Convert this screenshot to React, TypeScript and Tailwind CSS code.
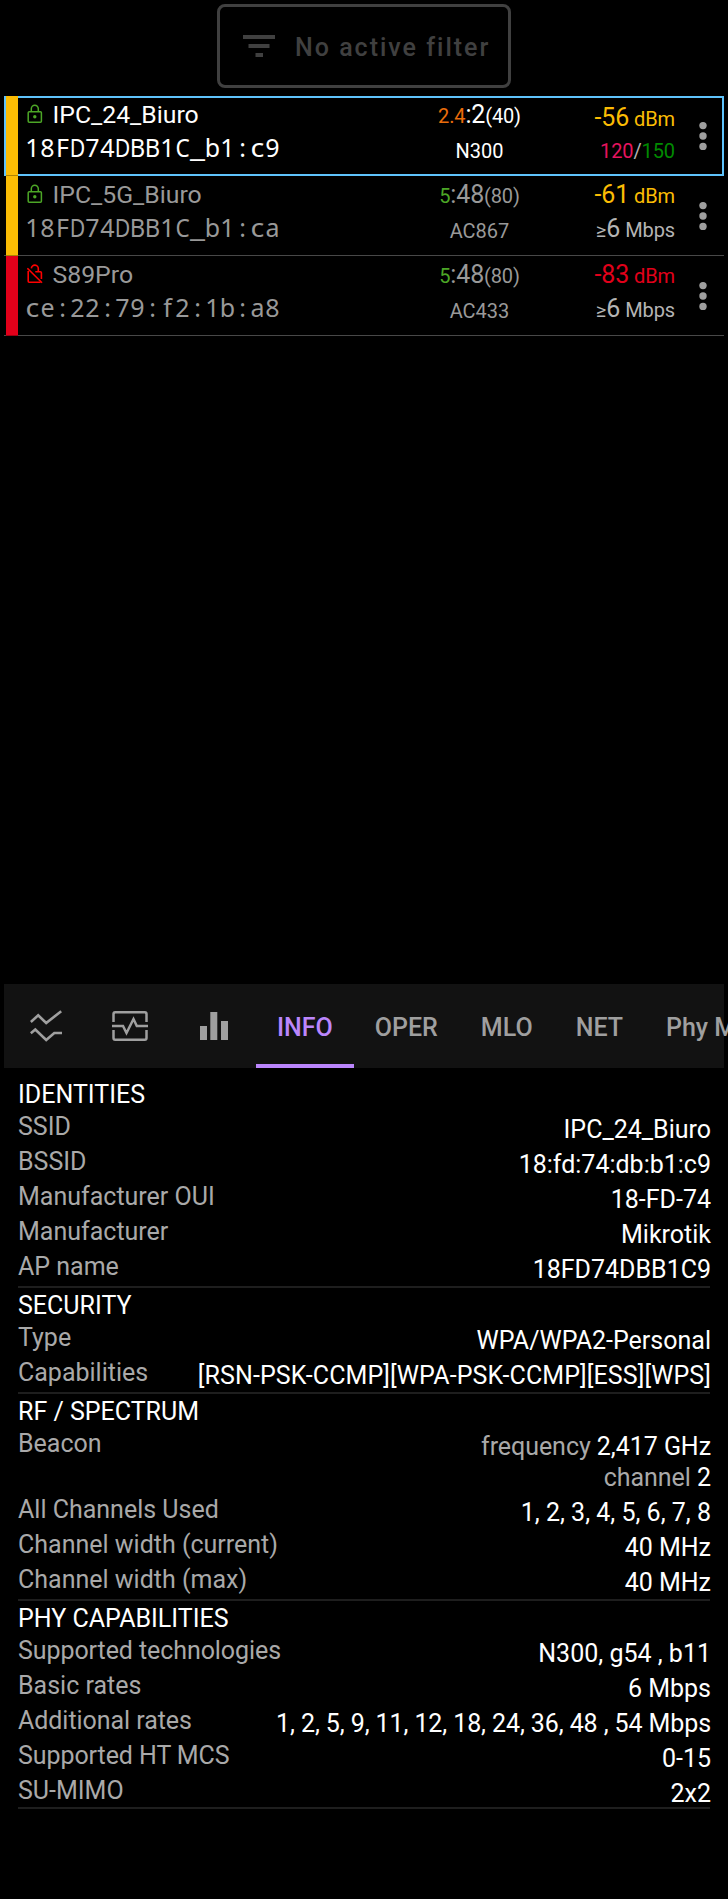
import React from "react";

type Detail = { label: string; value: React.ReactNode; labelClass?: string; valueClass?: string };

const Dim = ({ children }: { children: React.ReactNode }) => <span className="text-[#a9a9a9]">{children}</span>;

const sections: { title: string; rows: Detail[] }[] = [
  {
    title: "IDENTITIES",
    rows: [
      { label: "SSID", value: "IPC_24_Biuro" },
      { label: "BSSID", value: "18:fd:74:db:b1:c9" },
      { label: "Manufacturer OUI", value: "18-FD-74" },
      { label: "Manufacturer", value: "Mikrotik" },
      { label: "AP name", value: "18FD74DBB1C9" },
    ],
  },
  {
    title: "SECURITY",
    rows: [
      { label: "Type", value: "WPA/WPA2-Personal" },
      { label: "Capabilities", value: "[RSN-PSK-CCMP][WPA-PSK-CCMP][ESS][WPS]", valueClass: "tracking-[0.1px]" },
    ],
  },
  {
    title: "RF / SPECTRUM",
    rows: [
      {
        label: "Beacon",
        value: (
          <>
            <Dim>frequency</Dim> 2,417 GHz
            <br />
            <Dim>channel</Dim> 2
          </>
        ),
        valueClass: "tracking-[-0.05px]",
      },
      { label: "All Channels Used", value: "1, 2, 3, 4, 5, 6, 7, 8" },
      { label: "Channel width (current)", value: "40 MHz" },
      { label: "Channel width (max)", value: "40 MHz" },
    ],
  },
  {
    title: "PHY CAPABILITIES",
    rows: [
      { label: "Supported technologies", value: "N300, g54 , b11", labelClass: "tracking-[-0.08px]" },
      { label: "Basic rates", value: "6 Mbps" },
      {
        label: "Additional rates",
        value: "1, 2, 5, 9, 11, 12, 18, 24, 36, 48 , 54 Mbps",
        labelClass: "tracking-[-0.05px]",
        valueClass: "tracking-[-0.1px]",
      },
      { label: "Supported HT MCS", value: "0-15", labelClass: "tracking-[-0.08px]" },
      { label: "SU-MIMO", value: "2x2" },
    ],
  },
];

type Network = {
  name: string;
  address: string;
  secure: boolean;
  selected?: boolean;
  bar: string;
  band: string;
  bandColor: string;
  channel: string;
  width: string;
  standard: string;
  signal: string;
  signalColor: string;
  rate: React.ReactNode;
};

const minRate = (
  <>
    ≥<span className="text-[25px]">6</span> Mbps
  </>
);

const networks: Network[] = [
  {
    name: "IPC_24_Biuro",
    address: "18FD74DBB1C_b1:c9",
    secure: true,
    selected: true,
    bar: "bg-[#fbbc04]",
    band: "2.4",
    bandColor: "text-[#ea6d0b]",
    channel: "2",
    width: "(40)",
    standard: "N300",
    signal: "-56",
    signalColor: "text-[#fbbc04]",
    rate: (
      <>
        <span className="text-[#e5145f]">120</span>/<span className="text-[#008a00]">150</span>
      </>
    ),
  },
  {
    name: "IPC_5G_Biuro",
    address: "18FD74DBB1C_b1:ca",
    secure: true,
    bar: "bg-[#fbbc04]",
    band: "5",
    bandColor: "text-[#4ca626]",
    channel: "48",
    width: "(80)",
    standard: "AC867",
    signal: "-61",
    signalColor: "text-[#fbbc04]",
    rate: minRate,
  },
  {
    name: "S89Pro",
    address: "ce:22:79:f2:1b:a8",
    secure: false,
    bar: "bg-[#e2001a]",
    band: "5",
    bandColor: "text-[#4ca626]",
    channel: "48",
    width: "(80)",
    standard: "AC433",
    signal: "-83",
    signalColor: "text-[#e2001a]",
    rate: minRate,
  },
];

function LockIcon({ secure }: { secure: boolean }) {
  return secure ? (
    <svg width="16" height="20" viewBox="0 0 16 20" fill="none" stroke="#4ca626" strokeWidth="1.5" className="block">
      <rect x="1.2" y="7.7" width="13.2" height="10.6" rx="1" />
      <path d="M4.3 7.5V4.7a3.5 3.5 0 0 1 7 0v2.8" />
      <circle cx="7.8" cy="12.8" r="1.7" fill="#4ca626" stroke="none" />
    </svg>
  ) : (
    <svg width="16" height="20" viewBox="0 0 16 20" fill="none" stroke="#ff0000" strokeWidth="1.6" className="block">
      <path d="M1.2 7v10.3a1 1 0 0 0 1 1h11.4M8.3 7.7h5.1a1 1 0 0 1 1 1v6.2M4.4 4.4a3.4 3.4 0 0 1 6.9.3v2.8" />
      <path d="M.4 4.2 15 18.8" />
    </svg>
  );
}

const glyphFit: Record<string, string> = {
  D: "scale-x-85",
  B: "scale-x-95",
  C: "scale-x-90",
  c: "scale-x-115",
  _: "scale-x-135",
};

/* Lays every character in a cell of the same width. */
function FixedPitch({ text }: { text: string }) {
  return (
    <div className="flex h-[34px] font-['Noto_Sans'] text-[25px] leading-[34px]">
      {Array.from(text).map((ch, i) => (
        <span key={i} className={`flex w-[15px] justify-center ${glyphFit[ch] ?? ""}`}>
          {ch}
        </span>
      ))}
    </div>
  );
}

function NetworkRow({ n }: { n: Network }) {
  const tone = n.selected ? "text-white" : "text-[#999999]";
  const frame = n.selected ? "border-y-2 border-r-2 border-[#5fc3fb]" : "border-y-2 border-r-2 border-transparent";
  return (
    <div className="flex h-20">
      <div className={n.selected ? "w-0.5 bg-[#5fc3fb]" : "w-0.5 border-b border-[#484848]"} />
      <div className={`w-3 border-b border-black/30 ${n.bar}`} />
      <div className={n.selected ? "flex-1" : "flex-1 border-b border-[#484848]"}>
        <div className={`flex h-20 ${frame} ${tone}`}>
          <div className="w-[380px] pl-[9px]">
            <div className="flex h-[31px] pt-px">
              <div className="w-[25.5px] pt-[5px]">
                <LockIcon secure={n.secure} />
              </div>
              <div className="text-[24.8px] leading-[31px]">{n.name}</div>
            </div>
            <div className="-ml-0.5 pt-px">
              <FixedPitch text={n.address} />
            </div>
          </div>
          <div className="w-[163px] text-center text-[20px]">
            <div className="h-[34px] pt-px leading-[31px] tracking-[-0.15px]">
              <span className={n.bandColor}>{n.band}</span>
              <span className="text-[25px]">:{n.channel}</span>
              {n.width}
            </div>
            <div className="pt-[7px] leading-[25px]">{n.standard}</div>
          </div>
          <div className="w-[114px] text-right text-[20px] tracking-[-0.1px]">
            <div className={`h-[35px] leading-[31px] ${n.signalColor} ${n.selected ? "pt-1" : "pt-px"}`}>
              <span className="text-[25px]">{n.signal}</span> dBm
            </div>
            <div className={n.selected ? "pt-1.5 leading-[25px] text-[#b4b4b4]" : "leading-[31px] text-[#b4b4b4]"}>
              {n.rate}
            </div>
          </div>
          <svg width="8" height="30" viewBox="0 0 8 30" fill="#9e9e9e" className="mt-[23px] ml-6 block">
            <circle cx="4" cy="4.6" r="3.7" />
            <circle cx="4" cy="15" r="3.7" />
            <circle cx="4" cy="25.4" r="3.7" />
          </svg>
        </div>
      </div>
    </div>
  );
}

const tabs = ["INFO", "OPER", "MLO", "NET", "Phy MAC"];

export default function App() {
  return (
    <div className="flex h-[1899px] w-[728px] flex-col overflow-hidden bg-black font-[Roboto,sans-serif]">
      <div className="flex h-24 justify-center pt-1">
        <button className="flex h-[84px] w-[294px] items-center rounded-[8px] border-3 border-[#404040] pl-[23px] text-[#404040]">
          <svg width="32" height="22" viewBox="0 0 32 22" fill="currentColor" className="block">
            <path d="M0 0h32v4H0zM5.5 9h21v4h-21zM12.5 18h7.5v4h-7.5z" />
          </svg>
          <span className="ml-5 pt-[3px] text-[25px] font-medium tracking-[2px] whitespace-nowrap">No active filter</span>
        </button>
      </div>

      <div className="h-[888px] px-1">
        {networks.map((n) => (
          <NetworkRow key={n.name} n={n} />
        ))}
      </div>

      <div className="flex h-[84px] pl-1">
        <div className="flex w-[720px] shrink-0 bg-[#121212] text-[#9f9f9f]">
          <div className="flex w-[84px] shrink-0 items-center justify-center">
            <svg width="32" height="32" viewBox="0 0 32 32" fill="none" stroke="currentColor" strokeWidth="2.6">
              <path d="M.8 12 8.2 5.3 16.2 13 31.2 1.2" />
              <path d="M.8 23.3 5.3 19.5 16.2 30 24.3 23h7.7" />
            </svg>
          </div>
          <div className="flex w-[84px] shrink-0 items-center justify-center">
            <svg width="36" height="30" viewBox="0 0 36 30" fill="none" stroke="currentColor" strokeWidth="2.5">
              <path d="M1.5 11V3q0-1.7 1.7-1.7h29.6q1.7 0 1.7 1.7v8M1.5 19v8q0 1.7 1.7 1.7h29.6q1.7 0 1.7-1.7v-8" />
              <path d="M0 15h11l3.5 7L21.5 8l3.3 7H36" />
            </svg>
          </div>
          <div className="flex w-[84px] shrink-0 items-center justify-center">
            <svg width="28" height="28" viewBox="0 0 28 28" fill="currentColor">
              <path d="M0 14h7v14H0zM10.3 0h7v28h-7zM21 9h7v19h-7z" />
            </svg>
          </div>
          {tabs.map((t, i) => (
            <div
              key={t}
              className={
                i === 0
                  ? "flex shrink-0 items-center border-b-4 border-[#bb86fc] px-[21px] pt-[7px] text-[25px] font-medium text-[#bb86fc]"
                  : "flex shrink-0 items-center pt-[3px] pr-[22px] pl-[21px] text-[25px] font-medium whitespace-nowrap"
              }
            >
              {t}
            </div>
          ))}
        </div>
      </div>

      <div className="px-[18px] pt-[9px]">
        {sections.map((s) => (
          <section key={s.title} className="border-b-2 border-[#1e1e1e] pb-[3px] last:pb-0">
            <h2 className="h-8 pt-[3px] text-[25px] leading-[29px] text-white">{s.title}</h2>
            <div className="flex flex-col gap-px">
              {s.rows.map((r) => (
                <div key={r.label} className="-mb-0.5 flex justify-between pb-0.5 text-[25px]">
                  <div className={`h-[34px] pt-[3px] leading-[29px] text-[#a9a9a9] ${r.labelClass ?? ""}`}>{r.label}</div>
                  <div
                    className={`-mr-px -mb-0.5 pt-[5px] text-right leading-[31px] whitespace-nowrap text-white ${r.valueClass ?? ""}`}
                  >
                    {r.value}
                  </div>
                </div>
              ))}
            </div>
          </section>
        ))}
      </div>
    </div>
  );
}
